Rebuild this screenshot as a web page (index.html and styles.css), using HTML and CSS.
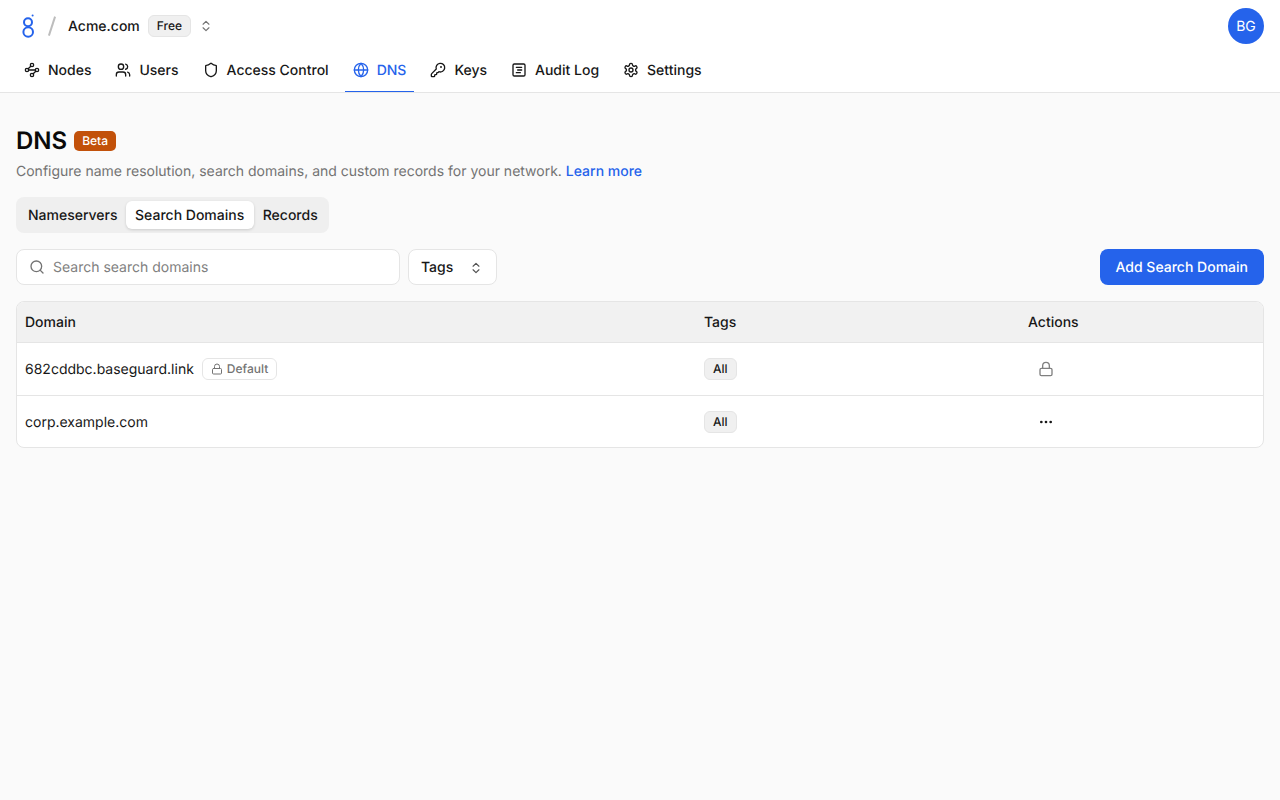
FILE: index.html
```html
<!DOCTYPE html>
<html lang="en">

<head>
  <meta charset="UTF-8">
  <meta name="viewport" content="width=device-width, initial-scale=1.0">
  <title>DNS</title>
  <link rel="stylesheet" href="styles.css">
</head>

<body>
  <header class="topbar">
    <div class="topbar-row">
      <div class="org">
        <svg class="logo" width="14" height="24" viewBox="0 0 14 24" fill="none" stroke="#2563eb" stroke-width="2">
          <circle cx="6" cy="8.2" r="4"></circle>
          <circle cx="6.2" cy="18" r="4.8"></circle>
          <circle cx="10.6" cy="1.6" r="1" fill="#2563eb" stroke="none"></circle>
        </svg>
        <span class="slash"></span>
        <span class="org-name">Acme.com</span>
        <span class="plan">Free</span>
        <svg class="chevrons" width="14" height="14" viewBox="0 0 24 24" fill="none" stroke="#737373" stroke-width="2" stroke-linecap="round" stroke-linejoin="round">
          <path d="m7 15 5 5 5-5"></path>
          <path d="m7 9 5-5 5 5"></path>
        </svg>
      </div>
      <div class="avatar"><span>BG</span></div>
    </div>
    <nav class="nav">
      <a class="nav-item">
        <svg width="16" height="16" viewBox="0 0 24 24" fill="none" stroke="currentColor" stroke-width="2" stroke-linecap="round" stroke-linejoin="round">
          <circle cx="12" cy="4.5" r="2.5"></circle>
          <path d="m10.200 6.300-3.900 3.900"></path>
          <circle cx="4.500" cy="12" r="2.5"></circle>
          <path d="M7 12h10"></path>
          <circle cx="19.500" cy="12" r="2.5"></circle>
          <path d="m13.800 17.700 3.900-3.900"></path>
          <circle cx="12" cy="19.500" r="2.5"></circle>
        </svg>
        Nodes
      </a>
      <a class="nav-item">
        <svg width="16" height="16" viewBox="0 0 24 24" fill="none" stroke="currentColor" stroke-width="2" stroke-linecap="round" stroke-linejoin="round">
          <path d="M16 21v-2a4 4 0 0 0-4-4H6a4 4 0 0 0-4 4v2"></path>
          <circle cx="9" cy="7" r="4"></circle>
          <path d="M22 21v-2a4 4 0 0 0-3-3.870"></path>
          <path d="M16 3.130a4 4 0 0 1 0 7.750"></path>
        </svg>
        Users
      </a>
      <a class="nav-item">
        <svg width="16" height="16" viewBox="0 0 24 24" fill="none" stroke="currentColor" stroke-width="2" stroke-linecap="round" stroke-linejoin="round">
          <path d="M20 13c0 5-3.500 7.500-7.660 8.950a1 1 0 0 1-.670-.010C7.500 20.500 4 18 4 13V6a1 1 0 0 1 1-1c2 0 4.500-1.200 6.240-2.720a1.170 1.170 0 0 1 1.520 0C14.510 3.810 17 5 19 5a1 1 0 0 1 1 1z"></path>
        </svg>
        Access Control
      </a>
      <a class="nav-item active">
        <svg width="16" height="16" viewBox="0 0 24 24" fill="none" stroke="currentColor" stroke-width="2" stroke-linecap="round" stroke-linejoin="round">
          <circle cx="12" cy="12" r="10"></circle>
          <path d="M12 2a14.500 14.500 0 0 0 0 20 14.500 14.500 0 0 0 0-20"></path>
          <path d="M2 12h20"></path>
        </svg>
        DNS
      </a>
      <a class="nav-item">
        <svg width="16" height="16" viewBox="0 0 24 24" fill="none" stroke="currentColor" stroke-width="2" stroke-linecap="round" stroke-linejoin="round">
          <path d="M2.586 17.414A2 2 0 0 0 2 18.828V21a1 1 0 0 0 1 1h3a1 1 0 0 0 1-1v-1a1 1 0 0 1 1-1h1a1 1 0 0 0 1-1v-1a1 1 0 0 1 1-1h.172a2 2 0 0 0 1.414-.586l.814-.814a6.500 6.500 0 1 0-4-4z"></path>
          <circle cx="16.500" cy="7.500" r=".5" fill="currentColor"></circle>
        </svg>
        Keys
      </a>
      <a class="nav-item">
        <svg width="16" height="16" viewBox="0 0 24 24" fill="none" stroke="currentColor" stroke-width="2" stroke-linecap="round" stroke-linejoin="round">
          <rect x="3" y="3" width="18" height="18" rx="2"></rect>
          <path d="M8 8h8M10 12h6M8 16h6"></path>
        </svg>
        Audit Log
      </a>
      <a class="nav-item">
        <svg width="16" height="16" viewBox="0 0 24 24" fill="none" stroke="currentColor" stroke-width="2" stroke-linecap="round" stroke-linejoin="round">
          <path d="M12.220 2h-.440a2 2 0 0 0-2 2v.180a2 2 0 0 1-1 1.730l-.430.250a2 2 0 0 1-2 0l-.150-.080a2 2 0 0 0-2.730.730l-.220.380a2 2 0 0 0 .730 2.730l.150.100a2 2 0 0 1 1 1.720v.510a2 2 0 0 1-1 1.740l-.150.090a2 2 0 0 0-.730 2.730l.220.380a2 2 0 0 0 2.730.730l.150-.080a2 2 0 0 1 2 0l.430.250a2 2 0 0 1 1 1.730V20a2 2 0 0 0 2 2h.440a2 2 0 0 0 2-2v-.180a2 2 0 0 1 1-1.730l.430-.250a2 2 0 0 1 2 0l.150.080a2 2 0 0 0 2.730-.730l.220-.390a2 2 0 0 0-.730-2.730l-.150-.080a2 2 0 0 1-1-1.740v-.500a2 2 0 0 1 1-1.740l.150-.090a2 2 0 0 0 .730-2.730l-.220-.380a2 2 0 0 0-2.730-.730l-.150.080a2 2 0 0 1-2 0l-.430-.250a2 2 0 0 1-1-1.730V4a2 2 0 0 0-2-2z"></path>
          <circle cx="12" cy="12" r="3"></circle>
        </svg>
        Settings
      </a>
    </nav>
  </header>

  <main class="content">
    <div class="title-row">
      <h1>DNS</h1>
      <span class="beta">Beta</span>
    </div>
    <p class="subtitle">Configure name resolution, search domains, and custom records for your network. <a class="link">Learn more</a></p>

    <div class="tabs">
      <button class="tab">Nameservers</button>
      <button class="tab selected">Search Domains</button>
      <button class="tab last">Records</button>
    </div>

    <div class="toolbar">
      <label class="search">
        <svg width="16" height="16" viewBox="0 0 24 24" fill="none" stroke="#737373" stroke-width="2" stroke-linecap="round" stroke-linejoin="round">
          <path d="m21 21-4.340-4.340"></path>
          <circle cx="11" cy="11" r="8"></circle>
        </svg>
        <input type="text" placeholder="Search search domains">
      </label>
      <button class="select">
        Tags
        <svg width="14" height="14" viewBox="0 0 24 24" fill="none" stroke="#525252" stroke-width="2" stroke-linecap="round" stroke-linejoin="round">
          <path d="m7 15 5 5 5-5"></path>
          <path d="m7 9 5-5 5 5"></path>
        </svg>
      </button>
      <button class="primary">Add Search Domain</button>
    </div>

    <div class="table-wrapper">
      <table>
        <thead>
          <tr>
            <th class="col-domain">Domain</th>
            <th class="col-tags">Tags</th>
            <th>Actions</th>
          </tr>
        </thead>
        <tbody>
          <tr>
            <td>
              <div class="domain">
                <span class="domain-name">682cddbc.baseguard.link</span>
                <span class="default">
                  <svg width="12" height="12" viewBox="0 0 24 24" fill="none" stroke="currentColor" stroke-width="2" stroke-linecap="round" stroke-linejoin="round">
                    <rect x="3" y="11" width="18" height="11" rx="2"></rect>
                    <path d="M7 11V7a5 5 0 0 1 10 0v4"></path>
                  </svg>
                  Default
                </span>
              </div>
            </td>
            <td><span class="tag">All</span></td>
            <td>
              <span class="action locked">
                <svg width="16" height="16" viewBox="0 0 24 24" fill="none" stroke="currentColor" stroke-width="2" stroke-linecap="round" stroke-linejoin="round">
                  <rect x="3" y="11" width="18" height="11" rx="2"></rect>
                  <path d="M7 11V7a5 5 0 0 1 10 0v4"></path>
                </svg>
              </span>
            </td>
          </tr>
          <tr>
            <td><div class="domain"><span class="domain-name">corp.example.com</span></div></td>
            <td><span class="tag">All</span></td>
            <td>
              <span class="action">
                <svg width="16" height="16" viewBox="0 0 24 24" fill="currentColor">
                  <circle cx="5" cy="12" r="2"></circle>
                  <circle cx="12" cy="12" r="2"></circle>
                  <circle cx="19" cy="12" r="2"></circle>
                </svg>
              </span>
            </td>
          </tr>
        </tbody>
      </table>
    </div>
  </main>
</body>

</html>
```

FILE: styles.css
```css
* {
  box-sizing: border-box;
}

body {
  margin: 0;
  min-height: 800px;
  background-color: #fafafa;
  color: #171717;
  font-family: Inter, "Liberation Sans", sans-serif;
  font-size: 14px;
  line-height: 20px;
  text-rendering: geometricPrecision;
}

button,
input {
  text-rendering: geometricPrecision;
}

.topbar {
  height: 93px;
  background-color: #fff;
  border-bottom: 1px solid #e5e5e5;
}

.topbar-row {
  display: flex;
  justify-content: space-between;
  align-items: center;
  height: 52px;
  padding: 0 16px;
}

.org {
  display: flex;
  align-items: center;
}

.logo {
  margin-left: 6px;
}

.slash {
  width: 1.5px;
  height: 20px;
  margin: 0 15.5px 0 15px;
  background-color: #bdbdbd;
  transform: rotate(18deg);
}

.org-name {
  padding-top: 1px;
  font-weight: 500;
}

.plan {
  height: 22px;
  margin-left: 8px;
  padding: 0 8px;
  border: 1px solid #e5e5e5;
  border-radius: 6px;
  background-color: #f0f0f0;
  font-size: 12px;
  font-weight: 500;
  line-height: 20px;
}

.chevrons {
  margin-left: 8px;
}

.avatar {
  display: flex;
  align-items: center;
  justify-content: center;
  width: 36px;
  height: 36px;
  padding-top: 1px;
  border-radius: 50%;
  background-color: #2563eb;
  color: #fff;
}

.nav {
  display: flex;
  gap: 8px;
  height: 40px;
  padding: 0 16px;
}

.nav-item {
  display: flex;
  align-items: center;
  gap: 8px;
  height: 40px;
  padding: 0 8px 2px;
  font-weight: 500;
  border-bottom: 1px solid transparent;
}

.nav-item svg {
  margin-bottom: 1px;
}

.nav-item.active {
  color: #2563eb;
  border-bottom-color: #2563eb;
}

.content {
  padding: 35px 16px 0;
}

.title-row {
  display: flex;
  align-items: center;
  gap: 7px;
  height: 26px;
}

h1 {
  margin: 0;
  color: #0a0a0a;
  font-size: 24px;
  font-weight: 600;
  line-height: 26px;
}

.beta {
  height: 20px;
  padding: 0 8px;
  border-radius: 5px;
  background-color: #c2510a;
  color: #fff;
  font-size: 12px;
  font-weight: 500;
  line-height: 20px;
}

.subtitle {
  margin: 8px 0 0;
  color: #737373;
}

.link {
  color: #2563eb;
  font-weight: 500;
}

.tabs {
  display: inline-flex;
  align-items: center;
  height: 36px;
  margin-top: 15px;
  padding: 4px;
  border-radius: 8px;
  background-color: #efefef;
  vertical-align: top;
}

.tab {
  height: 28px;
  padding: 1px 8px 0;
  border: 0;
  border-radius: 6px;
  background: none;
  color: #171717;
  font: 500 14px/20px Inter, "Liberation Sans", sans-serif;
}

.tab.selected {
  padding: 1px 9.5px 0;
  background-color: #fff;
  box-shadow: 0 1px 3px rgba(0, 0, 0, .15);
}

.tab.last {
  padding: 1px 7px 0 9px;
}

.toolbar {
  display: flex;
  gap: 8px;
  margin-top: 16px;
}

.search {
  display: flex;
  align-items: center;
  gap: 8px;
  width: 384px;
  height: 36px;
  padding: 0 12px;
  border: 1px solid #e5e5e5;
  border-radius: 8px;
  background-color: #fff;
}

.search input {
  flex: 1;
  min-width: 0;
  padding: 1px 0 0;
  border: 0;
  outline: none;
  background: none;
  color: #171717;
  font: 14px/20px Inter, "Liberation Sans", sans-serif;
}

.search input::placeholder {
  color: #808080;
}

.select {
  display: flex;
  align-items: center;
  justify-content: space-between;
  width: 89px;
  height: 36px;
  padding: 1px 13px 0 12px;
  border: 1px solid #e5e5e5;
  border-radius: 8px;
  background-color: #fff;
  color: #171717;
  font: 500 14px/20px Inter, "Liberation Sans", sans-serif;
}

.primary {
  height: 36px;
  margin-left: auto;
  padding: 1px 16px 0;
  border: 0;
  border-radius: 8px;
  background-color: #2563eb;
  color: #fff;
  font: 500 14px/20px Inter, "Liberation Sans", sans-serif;
}

.table-wrapper {
  margin-top: 16px;
  border: 1px solid #e5e5e5;
  border-radius: 8px;
  background-color: #fff;
  overflow: hidden;
}

table {
  width: 100%;
  border-collapse: collapse;
  table-layout: fixed;
}

th {
  height: 40px;
  padding: 2px 8px 0;
  background-color: #f1f1f1;
  border-bottom: 1px solid #e5e5e5;
  font-weight: 500;
  text-align: left;
}

.col-domain {
  width: 679px;
}

.col-tags {
  width: 324px;
}

td {
  height: 53px;
  padding: 0 8px;
  border-bottom: 1px solid #e5e5e5;
}

tbody tr:last-child td {
  height: 52px;
  padding-top: 2px;
  border-bottom: 0;
}

.domain {
  display: flex;
  align-items: center;
  gap: 8px;
}

.domain-name {
  padding-top: 2px;
}

.default {
  display: flex;
  align-items: center;
  gap: 4px;
  height: 22px;
  padding: 0 8px;
  border: 1px solid #e5e5e5;
  border-radius: 6px;
  color: #737373;
  font-size: 12px;
  font-weight: 500;
}

.tag {
  display: inline-block;
  height: 22px;
  padding: 0 8px;
  border: 1px solid #e5e5e5;
  border-radius: 6px;
  background-color: #f0f0f0;
  font-size: 12px;
  font-weight: 500;
  line-height: 20px;
  vertical-align: middle;
}

.action {
  display: flex;
  align-items: center;
  justify-content: center;
  width: 36px;
}

.action.locked {
  color: #808080;
}
```
